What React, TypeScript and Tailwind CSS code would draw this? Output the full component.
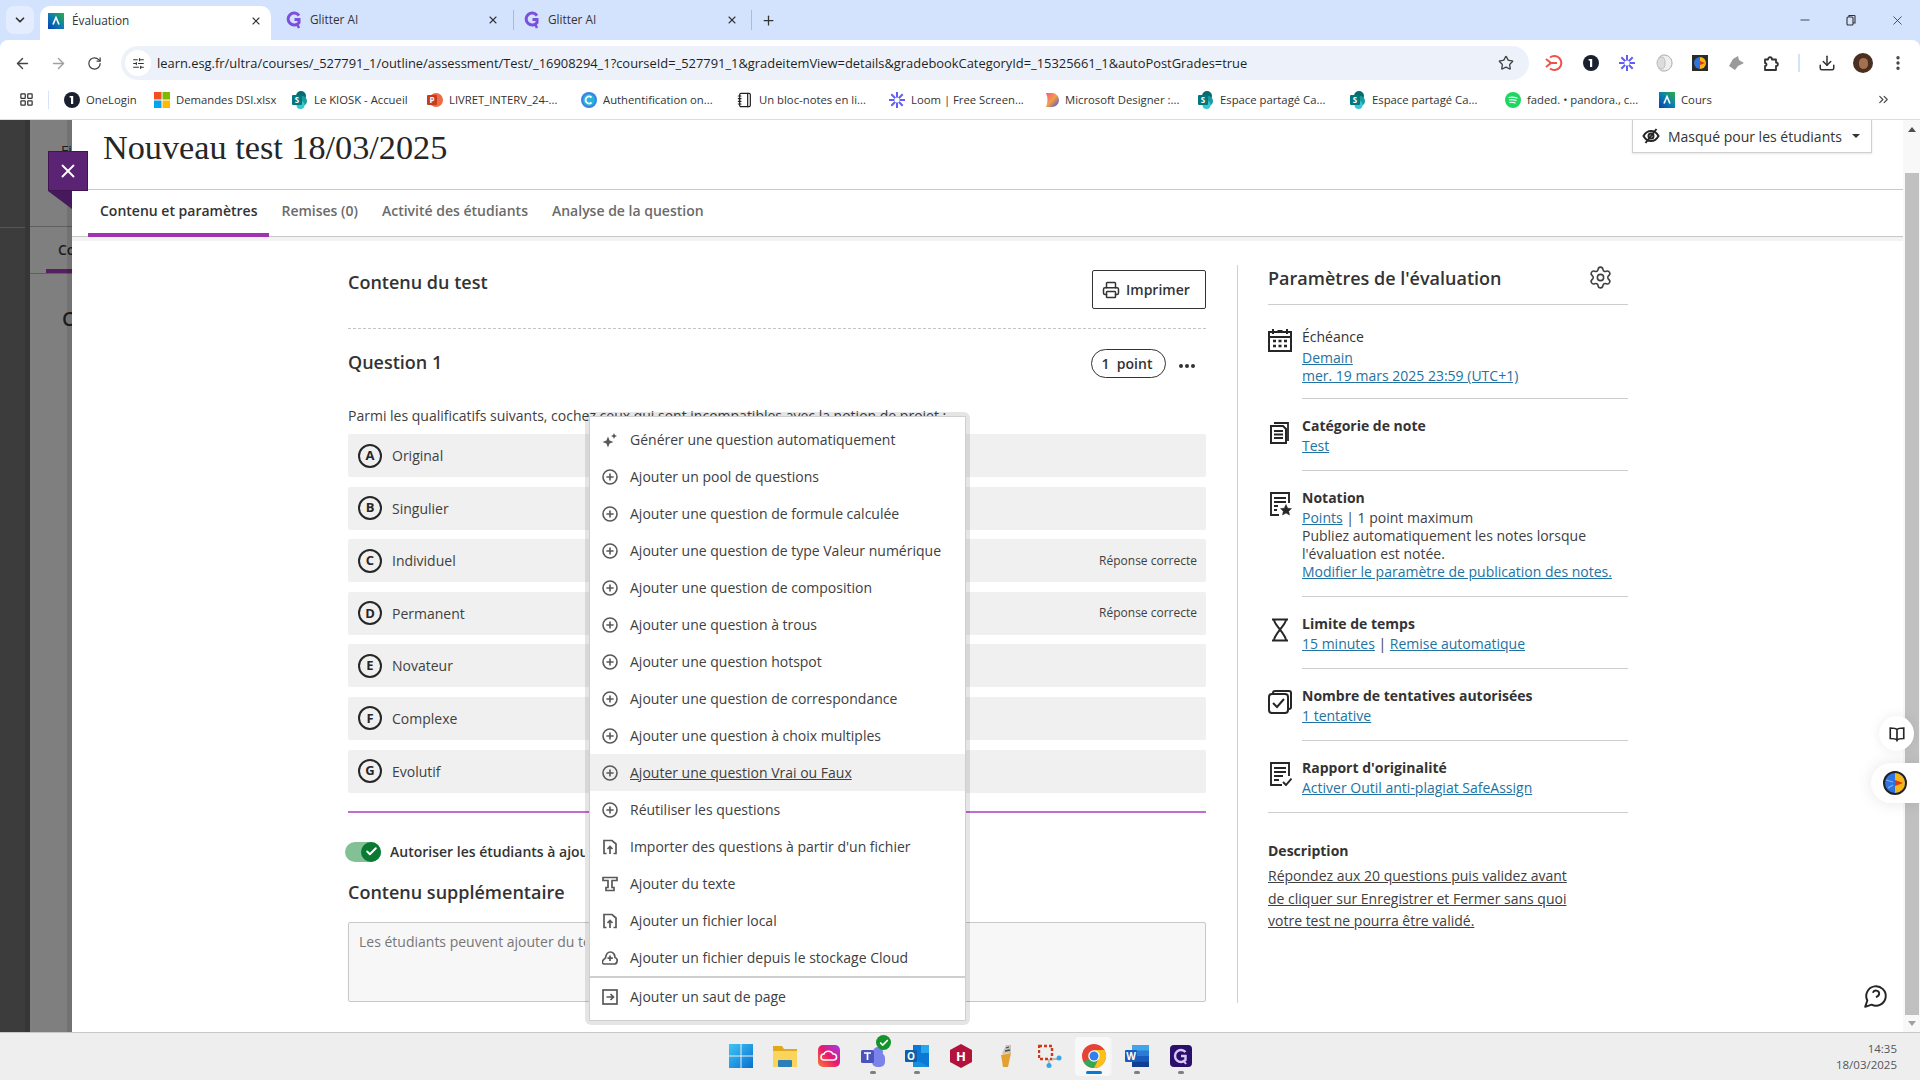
import React from "react";
import { ArrowLeft, ArrowRight, RotateCw, Star, ChevronDown, ChevronsRight, MoreVertical, Download, X, Plus, Minus, Printer, Settings, Check, LayoutGrid, Notebook, SlidersHorizontal } from "lucide-react";

const FavA = ({ s = 16, id }: { s?: number; id: string }) => (
  <svg width={s} height={s} viewBox="0 0 16 16" className="shrink-0">
    <defs>
      <linearGradient id={id} x1="1" y1="0" x2="0" y2="1">
        <stop offset="0" stopColor="#2fae3f" />
        <stop offset="0.5" stopColor="#0a7fb0" />
        <stop offset="1" stopColor="#0a3fb0" />
      </linearGradient>
    </defs>
    <rect width="16" height="16" fill={`url(#${id})`} />
    <path d="M5 11.5 L8 4.5 L11 11.5" fill="none" stroke="#fff" strokeWidth="1.6" />
  </svg>
);
const FavG = () => (
  <svg width="16" height="18" viewBox="0 0 16 18" className="shrink-0">
    <path d="M13 4.5 A6 6 0 1 0 13 11.5 L13 8.5 L8.5 8.5" fill="none" stroke="#7c4fe0" strokeWidth="3" />
    <path d="M11 13 L13 17" stroke="#7c4fe0" strokeWidth="2.5" />
  </svg>
);
const FavS = () => (
  <svg width="16" height="18" viewBox="0 0 16 18" className="shrink-0">
    <circle cx="9" cy="5" r="5" fill="#036c70" />
    <circle cx="10" cy="10" r="5" fill="#1a9ba1" />
    <circle cx="8.5" cy="14" r="4" fill="#37c6d0" />
    <rect x="0" y="4" width="10" height="10" rx="1" fill="#03787c" />
    <text x="5" y="12" textAnchor="middle" fontSize="8" fontWeight="700" fill="#fff" fontFamily="Open Sans">S</text>
  </svg>
);
const One = ({ s = 16 }: { s?: number }) => (
  <svg width={s} height={s} viewBox="0 0 16 16" className="shrink-0">
    <circle cx="8" cy="8" r="8" fill="#1a2030" />
    <rect x="7" y="4" width="2.2" height="8" fill="#fff" />
    <rect x="5.6" y="4" width="2" height="1.6" fill="#fff" />
  </svg>
);
const Loom = ({ s = 16 }: { s?: number }) => (
  <svg width={s} height={s} viewBox="0 0 16 16" className="shrink-0" stroke="#625df5" strokeWidth="2">
    <path d="M8 0V16M0 8H16M2.3 2.3L13.7 13.7M13.7 2.3L2.3 13.7" />
    <circle cx="8" cy="8" r="2.6" fill="#fff" stroke="none" />
  </svg>
);

const Bm = ({ w, icon, label }: { w: string; icon: React.ReactNode; label: string }) => (
  <div className={`flex items-center gap-[6px] shrink-0 ${w}`}>
    <span className="w-[16px] flex justify-center shrink-0">{icon}</span>
    <span className="text-[11.3px] text-[#333] whitespace-nowrap">{label}</span>
  </div>
);

const Tab = ({ icon, label, cls }: { icon: React.ReactNode; label: string; cls: string }) => (
  <div className={`flex items-center h-[34px] ${cls}`}>
    <span className="w-[16px] shrink-0">{icon}</span>
    <span className="ml-[8px] text-[11.8px] text-[#333] flex-1">{label}</span>
    <X size={12} strokeWidth={2.2} className="text-[#333]" />
  </div>
);

const Row = ({ l, t, right }: { l: string; t: string; right?: boolean }) => (
  <div className="h-[43px] mb-[9.6px] bg-[#f0f0f0] rounded-[2px] flex items-center pl-[10px] pr-[9px]">
    <span className="w-[24px] h-[24px] rounded-full border-2 border-[#262626] flex items-center justify-center text-[13px] font-bold text-[#262626]">{l}</span>
    <span className="ml-[10px] text-[14px] text-[#404040]">{t}</span>
    {right && <span className="ml-auto text-[12px] text-[#404040]">Réponse correcte</span>}
  </div>
);

const PlusI = () => (
  <svg width="16" height="16" viewBox="0 0 16 16" fill="none" stroke="#595959" strokeWidth="1.6"><circle cx="8" cy="8" r="7" /><path d="M8 4.4V11.6M4.4 8H11.6" /></svg>
);
const FileI = () => (
  <svg width="16" height="16" viewBox="0 0 16 16" fill="none" stroke="#595959" strokeWidth="1.7"><path d="M4.5 14.5H2V1.5H10L14 5V14.5H11.5" /><path d="M8 15V8M5.5 10L8 7.5L10.5 10" /></svg>
);
const Sparkle = () => (
  <svg width="16" height="16" viewBox="0 0 16 16" fill="#595959"><path d="M6 4.5L7.6 8.4L11.5 10L7.6 11.6L6 15.5L4.4 11.6L0.5 10L4.4 8.4Z" /><path d="M12 1L12.9 3.1L15 4L12.9 4.9L12 7L11.1 4.9L9 4L11.1 3.1Z" /></svg>
);
const TextI = () => (
  <svg width="16" height="16" viewBox="0 0 16 16" fill="none" stroke="#595959" strokeWidth="1.7"><path d="M1 4.5V1.5H15V4.5H10V11.5H12V14.5H4V11.5H6V4.5Z" /></svg>
);
const CloudI = () => (
  <svg width="16" height="16" viewBox="0 0 16 16" fill="none" stroke="#595959" strokeWidth="1.7"><path d="M4 14H2.5A2 2 0 0 1 1 10.5C1.5 9 3 8.5 3.5 8C4 4 6 2 8.5 2C11 2 13 4.5 13 7.5C14.5 8 15.5 9.5 15 11.5C14.7 13 13.5 14 12.5 14Z" /><path d="M8 5.5V11M5.5 8.2H10.8" /></svg>
);
const BreakI = () => (
  <svg width="16" height="16" viewBox="0 0 16 16" fill="none" stroke="#595959" strokeWidth="1.7"><rect x="1" y="1" width="14" height="14" /><path d="M4.5 8H11M8.5 5L11.5 8L8.5 11" /></svg>
);

const MenuItem = ({ icon, label, hover }: { icon: React.ReactNode; label: string; hover?: boolean }) => (
  <div className={`h-[37px] flex items-center pl-[12px] ${hover ? "bg-[#f0f0f0]" : ""}`}>
    <span className="w-[16px] flex justify-center shrink-0">{icon}</span>
    <span className={`ml-[12px] text-[14px] text-[#404040] whitespace-nowrap ${hover ? "underline" : ""}`}>{label}</span>
  </div>
);

const Lnk = ({ children }: { children: React.ReactNode }) => <span className="text-[#2273a3] underline">{children}</span>;

const Setting = ({ icon, title, children, bold = true, last, h, iconTop = "mt-[3px]" }: { icon: React.ReactNode; title: string; children: React.ReactNode; bold?: boolean; last?: boolean; h: string; iconTop?: string }) => (
  <div className={`flex ${h}`}>
    <span className={`w-[24px] shrink-0 ${iconTop}`}>{icon}</span>
    <div className={`ml-[10px] flex-1 text-[14px] leading-[18px] text-[#404040] ${last ? "" : "border-b border-[#cdcdcd]"}`}>
      <div className={`-mt-[1px] mb-[1px] leading-[20px] text-[#333] ${bold ? "font-bold" : ""}`}>{title}</div>
      {children}
    </div>
  </div>
);

const CalIcon = () => (
  <svg width="24" height="24" viewBox="0 0 24 24" fill="none" stroke="#262626" strokeWidth="2"><rect x="1" y="4" width="22" height="19" /><path d="M1 9H23" /><path d="M5 1V6M19 1V6M9.5 3H14.5" /><path d="M5 13H8M10.5 13H13.5M16 13H19M5 18H8M10.5 18H13.5M16 18H19" strokeWidth="2.4" /></svg>
);
const DocsIcon = () => (
  <svg width="24" height="24" viewBox="0 0 24 24" fill="none" stroke="#262626" strokeWidth="1.8"><path d="M6 3H20V21" /><path d="M3 6H15L18 9V23H3Z" strokeWidth="2" /><path d="M6 11H15M6 14.5H15M6 18H15" /></svg>
);
const NoteIcon = () => (
  <svg width="24" height="24" viewBox="0 0 24 24" fill="none" stroke="#262626" strokeWidth="1.9"><path d="M11 23H3V1H21V11" /><path d="M6 6H18M6 10H18M6 14H10M6 18H9" /><path d="M18 12.5L19.7 16.2L23.5 16.6L20.7 19.2L21.5 23L18 21L14.5 23L15.3 19.2L12.5 16.6L16.3 16.2Z" fill="#262626" strokeWidth="0.5" /></svg>
);
const HourIcon = () => (
  <svg width="24" height="24" viewBox="0 0 24 24" fill="none" stroke="#262626" strokeWidth="2"><path d="M4 1.5H20M4 22.5H20M6 1.5C6 7 18 16 18 22.5M18 1.5C18 7 6 16 6 22.5" /></svg>
);
const TryIcon = () => (
  <svg width="24" height="24" viewBox="0 0 24 24" fill="none" stroke="#262626" strokeWidth="2"><path d="M5 4V3A2 2 0 0 1 7 1H21A2 2 0 0 1 23 3V17A2 2 0 0 1 21 19H20" /><rect x="1" y="4" width="19" height="19" rx="3" /><path d="M5 13L9 17L16 9" /></svg>
);
const RepIcon = () => (
  <svg width="24" height="24" viewBox="0 0 24 24" fill="none" stroke="#262626" strokeWidth="1.9"><path d="M14 23H3V1H21V14" /><path d="M6 6H18M6 10H18M6 14H15M6 18H11" /><path d="M15 20L18 23L23.5 16.5" /></svg>
);

const Win = () => (
  <svg width="24" height="24" viewBox="0 0 24 24"><defs><linearGradient id="w" x1="0" y1="0" x2="1" y2="1"><stop offset="0" stopColor="#3ec6f4" /><stop offset="1" stopColor="#0a6fd0" /></linearGradient></defs><path fill="url(#w)" d="M0 0H11.5V11.5H0ZM12.5 0H24V11.5H12.5ZM0 12.5H11.5V24H0ZM12.5 12.5H24V24H12.5Z" /></svg>
);
const Folder = () => (
  <svg width="24" height="24" viewBox="0 0 24 24"><path d="M0 2H9L11 5H24V10H0Z" fill="#e0a91c" /><path d="M0 7H24V23H0Z" fill="#fbd45c" /><rect x="5" y="16" width="14" height="7" rx="1" fill="#2b7fb8" /></svg>
);
const CC = () => (
  <svg width="22" height="22" viewBox="0 0 22 22"><defs><linearGradient id="cc" x1="0" y1="1" x2="1" y2="0"><stop offset="0" stopColor="#fb7a2a" /><stop offset="0.5" stopColor="#e8196c" /><stop offset="1" stopColor="#9a3df0" /></linearGradient></defs><rect width="22" height="22" rx="5" fill="url(#cc)" /><path d="M6 15A3 3 0 0 1 6 9C7 5.5 13 5 15 9A3 3 0 0 1 16 15Z" fill="none" stroke="#fff" strokeWidth="1.5" /></svg>
);
const Teams = () => (
  <svg width="24" height="24" viewBox="0 0 24 24"><circle cx="17" cy="8" r="5" fill="#7b83eb" /><rect x="11" y="9" width="13" height="14" rx="5" fill="#7b83eb" /><rect x="0" y="6" width="13" height="13" rx="1.5" fill="#4b53bc" /><path d="M3 9H10M6.5 9V16" stroke="#fff" strokeWidth="1.7" /></svg>
);
const Outlook = () => (
  <svg width="24" height="24" viewBox="0 0 24 24"><rect x="8" y="1" width="16" height="22" fill="#0a78d4" /><rect x="16" y="1" width="8" height="8" fill="#28a8ea" /><path d="M8 14L24 23H8Z" fill="#1490df" /><rect x="0" y="6" width="12" height="12" rx="1" fill="#0f5ea8" /><text x="6" y="15.5" textAnchor="middle" fontSize="10" fontWeight="700" fill="#fff" fontFamily="Open Sans">O</text></svg>
);
const HexH = () => (
  <svg width="22" height="24" viewBox="0 0 22 24"><path d="M11 0L22 6V18L11 24L0 18V6Z" fill="#b3123d" /><text x="11" y="17" textAnchor="middle" fontSize="13" fontWeight="700" fill="#fff" fontFamily="Open Sans">H</text></svg>
);
const Cone = () => (
  <svg width="14" height="24" viewBox="0 0 14 24"><path d="M2 11L12 9L9 23H4Z" fill="#e2a232" /><path d="M3 10L7 1L12 1L12 9Z" fill="#c9c4ba" /><path d="M7 4L10 3M6 7L11 6" stroke="#4a4a4a" strokeWidth="1.3" /></svg>
);
const Snip = () => (
  <svg width="24" height="24" viewBox="0 0 24 24" fill="none"><rect x="1" y="2" width="13" height="13" stroke="#cc3a1a" strokeWidth="2.4" strokeDasharray="3 2" /><path d="M11 15V22M14 15H22" stroke="#b8b8b8" strokeWidth="1.8" /><circle cx="21" cy="14" r="2.5" fill="#35a6e8" /><circle cx="11" cy="21.5" r="2.5" fill="#35a6e8" /></svg>
);
const Chrome = ({ s = 24 }: { s?: number }) => (
  <svg width={s} height={s} viewBox="0 0 24 24"><circle cx="12" cy="12" r="12" fill="#e54335" /><path d="M12 12L1.6 18A12 12 0 0 0 12 24L18 12Z" fill="#34a853" /><path d="M12 6H22.4A12 12 0 0 1 12 24L18 12Z" fill="#fbc116" /><circle cx="12" cy="12" r="5.8" fill="#fff" /><circle cx="12" cy="12" r="4.5" fill="#2f7ff0" /></svg>
);
const Word = () => (
  <svg width="24" height="24" viewBox="0 0 24 24"><rect x="7" y="1" width="17" height="22" fill="#2b7cd3" /><rect x="7" y="1" width="17" height="5.5" fill="#41a5ee" /><rect x="7" y="12" width="17" height="5.5" fill="#185abd" /><rect x="7" y="17.5" width="17" height="5.5" fill="#103f91" /><rect x="0" y="6" width="12" height="12" rx="1" fill="#1a5cb8" /><text x="6" y="15.5" textAnchor="middle" fontSize="10" fontWeight="700" fill="#fff" fontFamily="Open Sans">W</text></svg>
);
const Glitter = () => (
  <svg width="22" height="22" viewBox="0 0 22 22"><rect width="22" height="22" rx="4" fill="#2a0f6b" /><path d="M15.5 7A6 6 0 1 0 15.5 15V11H11" fill="none" stroke="#d9c8fb" strokeWidth="2.4" /><path d="M13 15L16 19" stroke="#d9c8fb" strokeWidth="2" /></svg>
);
const TbItem = ({ w, children, dot }: { w: string; children: React.ReactNode; dot?: boolean }) => (
  <div className={`relative flex items-center justify-center h-[47px] pb-[1px] shrink-0 ${w}`}>
    {children}
    {dot && <span className="absolute bottom-[6px] w-[6px] h-[3px] rounded-full bg-[#7f7f7f]" />}
  </div>
);

const ExtBrain = ({ s = 16 }: { s?: number }) => (
  <svg width={s} height={s} viewBox="0 0 16 16"><rect width="16" height="16" fill="#2b2b2b" /><path d="M8 2A6 6 0 0 0 8 14Z" fill="#2f73e0" /><path d="M8 2A6 6 0 0 1 8 14Z" fill="#f7b614" /><path d="M8 6L13 8L8 10Z" fill="#d83a1a" /></svg>
);

export default function App() {
  return (
    <div className="w-[1920px] h-[1080px] overflow-hidden flex flex-col bg-white font-['Open_Sans',sans-serif] text-[#262626]">
      {/* tab strip */}
      <div className="h-[40px] shrink-0 bg-[#d3e3fd] flex items-end relative">
        <div className="flex items-center h-[40px] pl-[6px] w-full">
          <div className="w-[28px] h-[28px] rounded-[8px] bg-[#e3edfd] flex items-center justify-center shrink-0"><ChevronDown size={14} strokeWidth={3} className="text-[#333]" /></div>
          <div className="ml-[6px] mt-[6px] w-[231px] h-[34px] bg-white rounded-t-[10px] flex items-start pl-[8px] pr-[9px] shrink-0 pb-[5px]">
            <Tab icon={<FavA id="a1" />} label="Évaluation" cls="w-full !h-[29px]" />
          </div>
          <Tab icon={<FavG />} label="Glitter AI" cls="ml-[15px] w-[213px] shrink-0" />
          <span className="w-px h-[20px] bg-[#a8bcd8] ml-[14px] shrink-0" />
          <Tab icon={<FavG />} label="Glitter AI" cls="ml-[10px] w-[214px] shrink-0" />
          <span className="w-px h-[20px] bg-[#a8bcd8] ml-[13px] shrink-0" />
          <Plus size={15} strokeWidth={2} className="ml-[9px] text-[#333]" />
          <div className="ml-auto flex items-center pr-[15px] gap-[33px] text-[#333]">
            <Minus size={14} strokeWidth={1.5} />
            <svg width="12" height="12" viewBox="0 0 12 12" fill="none" stroke="#333" strokeWidth="1.1"><rect x="2" y="3" width="6" height="8" rx="1" /><path d="M4 3V1.5H9.5A1 1 0 0 1 10 2V9H8" /></svg>
            <X size={15} strokeWidth={1.3} />
          </div>
        </div>
      </div>
      {/* toolbar */}
      <div className="h-[40px] shrink-0 bg-[#d3e3fd]">
        <div className="h-full bg-white rounded-tr-[8px] rounded-tl-[8px] flex items-end pl-[14px] pr-[14px]">
          <div className="h-[34px] flex items-center w-full">
            <ArrowLeft size={17} strokeWidth={2} className="text-[#444] shrink-0" />
            <ArrowRight size={17} strokeWidth={2} className="ml-[19px] text-[#a0a0a0] shrink-0" />
            <RotateCw size={15} strokeWidth={2} className="ml-[20px] text-[#444] shrink-0" />
            <div className="ml-[19px] h-[34px] w-[1408px] rounded-full bg-[#edf2fa] flex items-center pl-[4px] pr-[15px] shrink-0">
              <span className="w-[26px] h-[26px] rounded-full bg-white flex items-center justify-center shrink-0"><SlidersHorizontal size={13} strokeWidth={2} className="text-[#333]" /></span>
              <span className="ml-[6px] pt-[1px] text-[12.9px] text-[#1f1f1f] whitespace-nowrap">learn.esg.fr/ultra/courses/_527791_1/outline/assessment/Test/_16908294_1?courseId=_527791_1&gradeitemView=details&gradebookCategoryId=_15325661_1&autoPostGrades=true</span>
              <Star size={16} strokeWidth={2} className="ml-auto text-[#444] shrink-0" />
            </div>
            <div className="flex items-center shrink-0 ml-[16px]">
              <svg width="18" height="18" viewBox="0 0 18 18" fill="none" stroke="#f0524a" strokeWidth="2"><path d="M5 3.5A7 7 0 1 1 5 14.5" /><path d="M1 5L6 9L1 13M4 9H12" /></svg>
              <span className="ml-[20px]"><One /></span>
              <span className="ml-[20px]"><Loom /></span>
              <svg className="ml-[20px]" width="18" height="18" viewBox="0 0 18 18"><path d="M9 1C14 1 17 5 17 9C17 13 14 17 9 17C5 17 3 15 3 9C3 4 5 1 9 1Z" fill="#efefef" stroke="#a8a8a8" /><path d="M7 3C4 3 2 6 2 9C2 12 4 15 7 15C9 15 10 12 10 9C10 6 9 3 7 3Z" fill="#dcdcdc" stroke="#bdbdbd" /></svg>
              <span className="ml-[19px]"><ExtBrain /></span>
              <svg className="ml-[20px]" width="16" height="16" viewBox="0 0 16 16" fill="#9a9a9a"><path d="M1 11L5 4L10 1L11 5L16 8L10 11L7 15Z" /></svg>
              <svg className="ml-[19px]" width="17" height="17" viewBox="0 0 17 17" fill="none" stroke="#333" strokeWidth="1.8"><path d="M2 4.5H5C5 1.5 9 1.5 9 4.5H13V7.5C15.5 7.5 15.5 11 13 11V15H2V11C4 11 4 8 2 8Z" strokeLinejoin="round" /></svg>
              <span className="ml-[18px] w-[2px] h-[18px] bg-[#d3e3fd]" />
              <Download size={18} strokeWidth={2} className="ml-[18px] text-[#333]" />
              <span className="ml-[17px] w-[20px] h-[20px] rounded-full bg-[#4a2e20] flex items-center justify-center"><span className="w-[9px] h-[11px] rounded-full bg-[#a5704f]" /></span>
              <MoreVertical size={18} strokeWidth={2.5} className="ml-[16px] text-[#444]" />
            </div>
          </div>
        </div>
      </div>
      {/* bookmarks */}
      <div className="h-[40px] shrink-0 bg-white border-b border-[#dcdcdc] flex items-center pl-[19px]">
        <LayoutGrid size={15} strokeWidth={2} className="text-[#333] shrink-0" />
        <span className="w-px h-[18px] bg-[#d3e3fd] ml-[14px] shrink-0" />
        <div className="ml-[15px] pt-[1px] flex items-center">
          <Bm w="w-[90px]" icon={<One />} label="OneLogin" />
          <Bm w="w-[138px]" icon={
            <svg width="16" height="16" viewBox="0 0 16 16"><rect width="7.5" height="7.5" fill="#f25022" /><rect x="8.5" width="7.5" height="7.5" fill="#7fba00" /><rect y="8.5" width="7.5" height="7.5" fill="#00a4ef" /><rect x="8.5" y="8.5" width="7.5" height="7.5" fill="#ffb900" /></svg>
          } label="Demandes DSI.xlsx" />
          <Bm w="w-[135px]" icon={<FavS />} label="Le KIOSK - Accueil" />
          <Bm w="w-[154px]" icon={
            <svg width="16" height="16" viewBox="0 0 16 16"><circle cx="9" cy="8" r="7" fill="#ed6c47" /><rect y="3" width="10" height="10" rx="1" fill="#c43e1c" /><text x="5" y="11" textAnchor="middle" fontSize="8" fontWeight="700" fill="#fff" fontFamily="Open Sans">P</text></svg>
          } label="LIVRET_INTERV_24-..." />
          <Bm w="w-[156px]" icon={
            <svg width="16" height="16" viewBox="0 0 16 16"><circle cx="8" cy="8" r="8" fill="#3f7ee8" /><circle cx="8" cy="8" r="6" fill="#24b6d9" /><path d="M10.5 5.5A3.5 3.5 0 1 0 10.5 10.5" fill="none" stroke="#fff" strokeWidth="1.8" /></svg>
          } label="Authentification on..." />
          <Bm w="w-[152px]" icon={<Notebook size={16} strokeWidth={1.8} className="text-[#222]" />} label="Un bloc-notes en li..." />
          <Bm w="w-[154px]" icon={<Loom />} label="Loom | Free Screen..." />
          <Bm w="w-[155px]" icon={
            <svg width="16" height="16" viewBox="0 0 16 16"><defs><linearGradient id="md" x1="0" y1="0" x2="1" y2="1"><stop offset="0" stopColor="#f25a8a" /><stop offset="0.5" stopColor="#f59e42" /><stop offset="1" stopColor="#3a49e8" /></linearGradient></defs><path d="M3 1H9A7 7 0 0 1 9 15H3Q6 8 3 1Z" fill="url(#md)" /></svg>
          } label="Microsoft Designer :..." />
          <Bm w="w-[152px]" icon={<FavS />} label="Espace partagé Ca..." />
          <Bm w="w-[155px]" icon={<FavS />} label="Espace partagé Ca..." />
          <Bm w="w-[154px]" icon={
            <svg width="16" height="16" viewBox="0 0 16 16"><circle cx="8" cy="8" r="8" fill="#1ed760" /><path d="M3.5 5.5C6.5 4.7 9.5 5 12.5 6.3M4 8C6.5 7.4 9 7.7 11.5 8.8M4.5 10.5C6.5 10 8.5 10.2 10.5 11.1" stroke="#fff" strokeWidth="1.2" fill="none" /></svg>
          } label="faded. • pandora., c..." />
          <Bm w="w-[60px]" icon={<FavA id="a2" />} label="Cours" />
        </div>
        <ChevronsRight size={15} strokeWidth={1.8} className="ml-[157px] text-[#444] shrink-0" />
      </div>
      {/* main */}
      <div className="h-[912px] shrink-0 flex relative overflow-hidden">
        <div className="w-[30px] shrink-0 bg-[#3c3c3c] border-r-[5px] border-[#363636]">
          <div className="mt-[107px] border-t border-[#555]" />
        </div>
        <div className="relative w-[42px] shrink-0 bg-[#7f7f7f] overflow-hidden text-[#1c1c1c]">
          <div className="h-[107px] border-b border-[#5f5f5f] pl-[31px] pt-[20px] text-[14px] whitespace-nowrap">Fi</div>
          <div className="pl-[28px] pt-[12px] h-[47px] border-b border-[#5f5f5f] relative text-[14px] font-semibold whitespace-nowrap">
            Co
            <span className="absolute left-[16px] bottom-0 right-0 h-[4px] bg-[#55205f]" />
          </div>
          <div className="pl-[32px] pt-[30px] text-[20px] font-semibold">C</div>
          <span className="absolute right-0 inset-y-0 w-[5px] bg-black/10" />
        </div>
        {/* white panel */}
        <div className="flex-1 min-w-0 bg-white flex flex-col">
          <div className="h-[70px] shrink-0 border-b border-[#c8c8c8] flex items-start justify-between pl-[31px] pr-[31px]">
            <h1 className="mt-[6px] font-['Liberation_Serif',serif] text-[34.25px] leading-[42px] font-normal text-[#262626]">Nouveau test 18/03/2025</h1>
            <div className="w-[240px] h-[33px] bg-white border border-t-0 border-[#d0d0d0] shadow-[0_1px_2px_rgba(0,0,0,.1)] flex items-center pl-[9px]">
              <svg width="18" height="18" viewBox="0 0 18 18" fill="none" stroke="#262626" strokeWidth="2"><path d="M1.5 9C3.5 5.5 6 4 9 4C12 4 14.5 5.5 16.5 9C14.5 12.5 12 14 9 14C6 14 3.5 12.5 1.5 9Z" /><circle cx="9" cy="9" r="2.5" /><path d="M14.5 2L3.5 16" /></svg>
              <span className="ml-[8px] text-[14px] text-[#333]">Masqué pour les étudiants</span>
              <span className="ml-[10px] w-0 h-0 border-x-[4px] border-x-transparent border-t-[4px] border-t-[#333]" />
            </div>
          </div>
          <div className="h-[47px] shrink-0 border-b border-[#c8c8c8] pl-[16px] flex text-[14px]">
            <div className="px-[12px] pb-[2px] flex items-center border-b-4 border-[#a033b0] font-semibold text-[#333] h-[47px]">Contenu et paramètres</div>
            <div className="px-[12px] flex items-center font-semibold text-[#6b6b6b] pb-[5px]">Remises (0)</div>
            <div className="px-[12px] flex items-center font-semibold text-[#6b6b6b] pb-[5px]">Activité des étudiants</div>
            <div className="px-[12px] flex items-center font-semibold text-[#6b6b6b] pb-[5px]">Analyse de la question</div>
          </div>
          <div className="h-[4px] shrink-0 bg-[#f3f3f3]" />
          <div className="flex-1 flex pl-[276px] min-h-0">
            {/* left */}
            <div className="w-[858px] shrink-0">
              <div className="mt-[29px] h-[39px] flex items-start justify-between">
                <h2 className="text-[18px] leading-[24px] font-semibold text-[#333]">Contenu du test</h2>
                <div className="w-[114px] h-[39px] border border-[#333] rounded-[2px] flex items-center pl-[9px] gap-[6px] text-[14px] font-semibold text-[#333]">
                  <Printer size={18} strokeWidth={2} />Imprimer
                </div>
              </div>
              <div className="mt-[19px] border-t border-dashed border-[#c4c4c4]" />
              <div className="mt-[20px] h-[29px] flex items-center">
                <h3 className="-mt-[2px] text-[18px] font-semibold text-[#333]">Question 1</h3>
                <div className="ml-auto w-[75px] h-[29px] border border-[#333] rounded-full flex items-center justify-center pr-[3px] text-[14px] font-semibold text-[#333]">1&nbsp; point</div>
                <div className="ml-[13px] mr-[11px] mt-[4px] flex gap-[2px]">
                  <span className="w-[4px] h-[4px] rounded-full bg-[#333]" /><span className="w-[4px] h-[4px] rounded-full bg-[#333]" /><span className="w-[4px] h-[4px] rounded-full bg-[#333]" />
                </div>
              </div>
              <p className="mt-[27.5px] text-[14px] leading-[19px] text-[#404040] mb-[9.5px]">Parmi les qualificatifs suivants, cochez ceux qui sont incompatibles avec la notion de projet :</p>
              <Row l="A" t="Original" />
              <Row l="B" t="Singulier" />
              <Row l="C" t="Individuel" right />
              <Row l="D" t="Permanent" right />
              <Row l="E" t="Novateur" />
              <Row l="F" t="Complexe" />
              <Row l="G" t="Evolutif" />
              <div className="mt-[18px] h-[2px] bg-[#c26cd2]" />
              <div className="mt-[29px] flex items-center -ml-[3px] h-[20px]">
                <div className="w-[36px] h-[20px] rounded-full bg-[#82c096] flex justify-end shrink-0">
                  <span className="w-[20px] h-[20px] rounded-full bg-[#0a7a32] flex items-center justify-center"><Check size={13} strokeWidth={3.5} className="text-white" /></span>
                </div>
                <span className="ml-[9px] w-[195px] overflow-hidden text-[14px] font-semibold text-[#333] whitespace-nowrap">Autoriser les étudiants à ajouter du contenu supplémentaire</span>
              </div>
              <h2 className="mt-[17px] text-[18px] leading-[26px] font-semibold text-[#333]">Contenu supplémentaire</h2>
              <div className="mt-[17px] h-[80px] bg-[#f7f7f7] border border-[#c8c8c8] rounded-[2px] pl-[10px] pt-[8px] text-[14px] text-[#767676]">
                <div className="w-[226px] overflow-hidden whitespace-nowrap">Les étudiants peuvent ajouter du texte et des fichiers ici</div>
              </div>
            </div>
            {/* right */}
            <div className="ml-[31px] mt-[24px] h-[738px] w-[392px] shrink-0 border-l border-[#d0d0d0] pl-[30px]">
              <div className="h-[40px] w-[360px] border-b border-[#cdcdcd] flex items-start justify-between pr-[15px]">
                <h2 className="text-[18px] leading-[24px] font-semibold text-[#333] mt-[1px]">Paramètres de l'évaluation</h2>
                <Settings size={25} strokeWidth={1.5} className="text-[#404040]" />
              </div>
              <div className="w-[360px] pt-[23px]">
                <Setting h="h-[71px]" bold={false} iconTop="mt-0" icon={<CalIcon />} title="Échéance">
                  <div className="pt-[1px]"><Lnk>Demain</Lnk></div>
                  <div><Lnk>mer. 19 mars 2025 23:59 (UTC+1)</Lnk></div>
                </Setting>
                <div className="h-[18px]" />
                <Setting h="h-[54px]" icon={<DocsIcon />} title="Catégorie de note">
                  <div><Lnk>Test</Lnk></div>
                </Setting>
                <div className="h-[18px]" />
                <Setting h="h-[108px]" icon={<NoteIcon />} title="Notation">
                  <div><Lnk>Points</Lnk> | 1 point maximum</div>
                  <div>Publiez automatiquement les notes lorsque<br />l'évaluation est notée.</div>
                  <div><Lnk>Modifier le paramètre de publication des notes.</Lnk></div>
                </Setting>
                <div className="h-[18px]" />
                <Setting h="h-[54px]" icon={<HourIcon />} title="Limite de temps">
                  <div><Lnk>15 minutes</Lnk> | <Lnk>Remise automatique</Lnk></div>
                </Setting>
                <div className="h-[18px]" />
                <Setting h="h-[54px]" icon={<TryIcon />} title="Nombre de tentatives autorisées">
                  <div><Lnk>1 tentative</Lnk></div>
                </Setting>
                <div className="h-[18px]" />
                <Setting h="h-[36px]" last icon={<RepIcon />} title="Rapport d'originalité">
                  <div><Lnk>Activer Outil anti-plagiat SafeAssign</Lnk></div>
                </Setting>
              </div>
              <div className="mt-[17px] w-[360px] border-t border-[#cdcdcd] pt-[28px] text-[14px] text-[#404040]">
                <div className="font-bold text-[#333] leading-[20px]">Description</div>
                <p className="mt-[4px] leading-[22.5px] underline w-[305px] text-[14px]">Répondez aux 20 questions puis validez avant de cliquer sur Enregistrer et Fermer sans quoi votre test ne pourra être validé.</p>
              </div>
            </div>
          </div>
        </div>
        {/* scrollbar */}
        <div className="w-[17px] shrink-0 bg-[#f8f8f8] flex flex-col items-center">
          <span className="mt-[7px] w-0 h-0 border-x-[4px] border-x-transparent border-b-[5px] border-b-[#505050]" />
          <div className="mt-[41px] ml-[1px] w-[14px] h-[842px] bg-[#c0c0c0]" />
          <span className="mt-[6px] w-0 h-0 border-x-[4px] border-x-transparent border-t-[5px] border-t-[#a0a0a0]" />
        </div>

        {/* purple close flag */}
        <div className="absolute left-[48px] top-[31px] w-[40px]">
          <div className="w-[40px] h-[40px] bg-[#5b2374] border border-[#3f1650] flex items-center justify-center"><X size={22} strokeWidth={2} className="text-white" /></div>
          <svg width="24" height="18" viewBox="0 0 24 18" className="block"><path d="M0 0H24V18Z" fill="#45195a" /></svg>
        </div>

        {/* dropdown */}
        <div className="absolute left-[585px] top-[292px] w-[385px] p-[4px] rounded-[6px] bg-black/10">
          <div className="bg-white border border-[#cfcfcf] pt-[4px]">
            <MenuItem icon={<Sparkle />} label="Générer une question automatiquement" />
            <MenuItem icon={<PlusI />} label="Ajouter un pool de questions" />
            <MenuItem icon={<PlusI />} label="Ajouter une question de formule calculée" />
            <MenuItem icon={<PlusI />} label="Ajouter une question de type Valeur numérique" />
            <MenuItem icon={<PlusI />} label="Ajouter une question de composition" />
            <MenuItem icon={<PlusI />} label="Ajouter une question à trous" />
            <MenuItem icon={<PlusI />} label="Ajouter une question hotspot" />
            <MenuItem icon={<PlusI />} label="Ajouter une question de correspondance" />
            <MenuItem icon={<PlusI />} label="Ajouter une question à choix multiples" />
            <MenuItem hover icon={<PlusI />} label="Ajouter une question Vrai ou Faux" />
            <MenuItem icon={<PlusI />} label="Réutiliser les questions" />
            <MenuItem icon={<FileI />} label="Importer des questions à partir d'un fichier" />
            <MenuItem icon={<TextI />} label="Ajouter du texte" />
            <MenuItem icon={<FileI />} label="Ajouter un fichier local" />
            <MenuItem icon={<CloudI />} label="Ajouter un fichier depuis le stockage Cloud" />
            <div className="h-[2px] bg-[#cfcfcf]" />
            <MenuItem icon={<BreakI />} label="Ajouter un saut de page" />
            <div className="h-[5px]" />
          </div>
        </div>

        {/* floating helpers */}
        <div className="absolute right-[6px] top-[596px] w-[35px] h-[35px] rounded-full bg-white shadow-[0_0_12px_rgba(0,0,0,.08)] flex items-center justify-center">
          <svg width="18" height="18" viewBox="0 0 24 24" fill="none" stroke="#262626" strokeWidth="2.2"><path d="M12 6C10 4 6 4 3 4V18C6 18 10 18 12 20C14 18 18 18 21 18V4C18 4 14 4 12 6ZM12 6V22" /></svg>
        </div>
        <div className="absolute right-0 top-[643px] w-[49px] h-[40px] rounded-l-full bg-white shadow-[0_0_16px_rgba(0,0,0,.1)] flex items-center pl-[12px]">
          <svg width="24" height="24" viewBox="0 0 24 24"><circle cx="12" cy="12" r="11" fill="#2f73e0" stroke="#222" strokeWidth="2" /><path d="M12 2A10 10 0 0 1 12 22Z" fill="#f7b614" /><path d="M12 9L20 12L12 15Z" fill="#d83a1a" /><path d="M3 9L10 11M5 17L10 14" stroke="#7cb4f5" strokeWidth="1.2" /></svg>
        </div>
        <svg className="absolute left-[1863px] top-[863px]" width="26" height="26" viewBox="0 0 24 24" fill="none" stroke="#262626" strokeWidth="1.8"><path d="M7.9 20A9 9 0 1 0 4 16.1L2 22Z" strokeLinejoin="round" /><path d="M9.09 9a3 3 0 0 1 5.83 1c0 2-3 3-3 3" /><path d="M12 17h.01" /></svg>
      </div>
      {/* taskbar */}
      <div className="h-[48px] shrink-0 bg-[#eeeeee] border-t border-[#c8c8c8] flex items-center relative">
        <div className="ml-[719px] flex items-center">
          <TbItem w="w-[44px]"><Win /></TbItem>
          <TbItem w="w-[44px]"><Folder /></TbItem>
          <TbItem w="w-[44px]"><CC /></TbItem>
          <TbItem w="w-[44px]" dot>
            <Teams />
            <span className="absolute top-[2px] right-[4px] w-[15px] h-[15px] rounded-full bg-[#14922b] flex items-center justify-center"><Check size={10} strokeWidth={4} className="text-white" /></span>
          </TbItem>
          <TbItem w="w-[44px]" dot><Outlook /></TbItem>
          <TbItem w="w-[44px]"><HexH /></TbItem>
          <TbItem w="w-[45px]"><Cone /></TbItem>
          <TbItem w="w-[44px]"><Snip /></TbItem>
          <div className="relative w-[43px] h-[47px] pb-[1px] flex items-center justify-center shrink-0">
            <span className="absolute left-[3px] top-[4px] w-[35px] h-[39px] rounded-[4px] bg-[#f8f8f8] shadow-[2px_0_0_#f4f4f4]" />
            <span className="relative"><Chrome /></span>
            <span className="absolute bottom-[6px] left-[14px] w-[16px] h-[3px] rounded-full bg-[#0a78d4]" />
          </div>
          <TbItem w="w-[44px]" dot><Word /></TbItem>
          <TbItem w="w-[44px]" dot><Glitter /></TbItem>
        </div>
        <div className="ml-auto pr-[23px] text-right text-[11.5px] leading-[16px] text-[#555]">
          <div>14:35</div>
          <div>18/03/2025</div>
        </div>
      </div>
    </div>
  );
}
